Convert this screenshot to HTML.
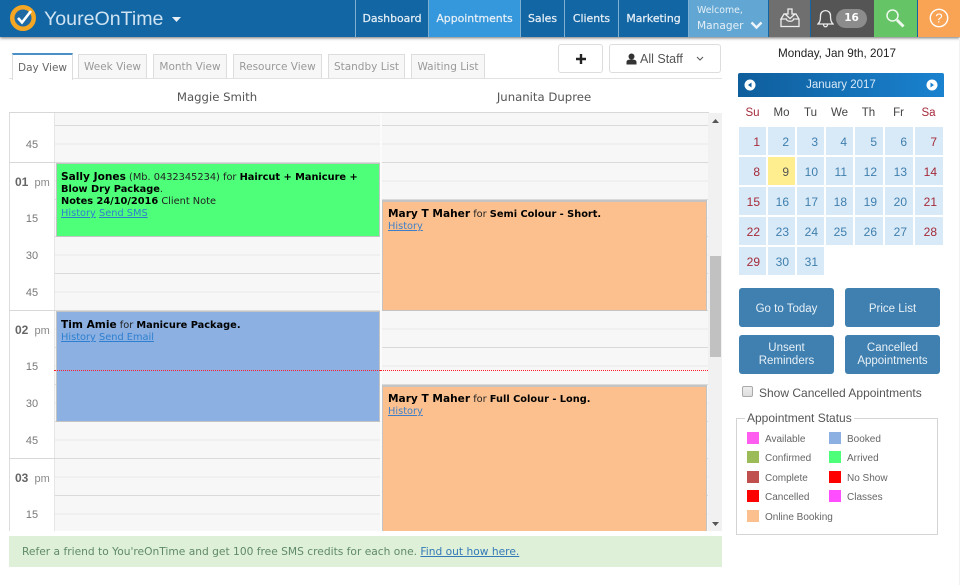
<!DOCTYPE html>
<html><head><meta charset="utf-8"><style>
html,body{margin:0;padding:0;background:#fff;width:960px;height:585px;overflow:hidden}
body{position:relative;font-family:"DejaVu Sans",sans-serif;font-size:10px;color:#111}
div,span.a,a.a,svg{position:absolute}
.t{white-space:nowrap}
.nav{top:0;height:37px;line-height:38px;background:#1266a3;color:#e4eef6;font-size:10.9px;text-align:center;font-weight:400;-webkit-text-stroke:.25px #e4eef6}
.tab{top:54px;height:23px;line-height:24px;border:1px solid #ddd;border-bottom:0;background:#f7f7f7;color:#999;font-size:10.5px;text-align:center;box-sizing:content-box}
.hd{top:90px;font-size:11.7px;color:#555;text-align:center}
.tm{left:25px;width:14px;text-align:center;font-family:"Liberation Sans",sans-serif;font-size:11px;color:#777}
.hr{left:15px;font-family:"Liberation Sans",sans-serif;font-size:11px;color:#888}
.hr b{font-size:12px;color:#666}
.ln{left:9px;width:46px;height:1px;background:#d8d8d8}
.ev{box-sizing:border-box;border:1px solid #c4c4c4;padding:7px 4px 4px;font-size:9.8px;line-height:12px;color:#222}
.ev b{color:#000}
.ev b.n{font-size:10.6px}
.ev u{color:#2f7fd0}
.dw{top:107px;width:29px;text-align:center;font-family:"Liberation Sans",sans-serif;font-size:11.5px;color:#444}
.c{width:27px;height:28px;line-height:30px;background:#d8e9f7;color:#3f7fae;font-family:"Liberation Sans",sans-serif;font-size:12px;text-align:right;padding-right:6px;box-sizing:border-box}
.r{color:#a52a3a}
.btn{background:#3f80b1;color:#e8f0f6;border-radius:3px;width:95px;height:39px;font-family:"Liberation Sans",sans-serif;font-size:11.5px;line-height:13px;text-align:center;box-sizing:border-box}
.sw{width:12px;height:12px}
.lb{font-family:"Liberation Sans",sans-serif;font-size:10px;color:#666;white-space:nowrap}
</style></head><body>

<!-- grid -->
<div style="left:9px;top:112px;width:713px;height:419px;background:#fff"></div>
<div style="left:9px;top:112px;width:1px;height:419px;background:#ddd"></div>
<div style="left:9px;top:112px;width:700px;height:1px;background:#d8d8d8"></div>
<div style="left:54px;top:113px;width:654px;height:418px;background-color:#f7f7f7;background-image:repeating-linear-gradient(to bottom,transparent 0,transparent 12px,#dadada 12px,#dadada 13px,transparent 13px,transparent 30px,#f0f0f0 30px,#f0f0f0 32px,transparent 32px,transparent 37px)"></div>
<div style="left:54px;top:113px;width:1px;height:418px;background:#e6e6e6"></div>
<div style="left:380px;top:113px;width:2px;height:418px;background:#fbfbfb"></div>
<div class="ln" style="top:162px"></div>
<div class="ln" style="top:310px"></div>
<div class="ln" style="top:458px"></div>

<div class="tm t" style="top:139px">45</div>
<div class="hr t" style="top:175px"><b>01</b>&nbsp; pm</div>
<div class="tm t" style="top:213px">15</div>
<div class="tm t" style="top:250px">30</div>
<div class="tm t" style="top:287px">45</div>
<div class="hr t" style="top:323px"><b>02</b>&nbsp; pm</div>
<div class="tm t" style="top:361px">15</div>
<div class="tm t" style="top:398px">30</div>
<div class="tm t" style="top:435px">45</div>
<div class="hr t" style="top:471px"><b>03</b>&nbsp; pm</div>
<div class="tm t" style="top:509px">15</div>

<div class="ev" style="left:56px;top:163px;width:324px;height:74px;background:#4dff79"><b class="n">Sally Jones</b> (Mb. 0432345234) for <b>Haircut + Manicure +<br>Blow Dry Package</b>.<br><b>Notes 24/10/2016</b> Client Note<br><u>History</u> <u>Send SMS</u></div>
<div class="ev" style="left:56px;top:311px;width:324px;height:111px;background:#8bb0e1"><b class="n">Tim Amie</b> for <b>Manicure Package.</b><br><u>History</u> <u>Send Email</u></div>
<div class="ev" style="left:382px;top:200px;width:325px;height:111px;background:#fbc08e;border-top:2px solid #c4c4c4;padding:6px 5px 4px"><b class="n">Mary T Maher</b> for <b>Semi Colour - Short.</b><br><u style="color:#3f7fc8">History</u></div>
<div class="ev" style="left:382px;top:385px;width:325px;height:146px;background:#fbc08e;border-bottom:0;border-top:2px solid #c4c4c4;padding:6px 5px 4px"><b class="n">Mary T Maher</b> for <b>Full Colour - Long.</b><br><u style="color:#3f7fc8">History</u></div>
<div style="left:54px;top:370px;width:326px;height:0;border-top:1px dotted #ff1a2a"></div>
<div style="left:380px;top:370px;width:328px;height:0;border-top:1px dotted #ff1a2a"></div>

<!-- scrollbar -->
<div style="left:708px;top:113px;width:14px;height:418px;background:#f1f1f1"></div>
<div style="left:710px;top:256px;width:11px;height:101px;background:#c1c1c1"></div>
<svg style="left:711px;top:118px" width="9" height="6"><path d="M1 5L4.5 1L8 5Z" fill="#555"/></svg>
<svg style="left:711px;top:521px" width="9" height="6"><path d="M1 1L8 1L4.5 5Z" fill="#555"/></svg>

<!-- notice -->
<div class="t" style="left:9px;top:536px;width:713px;height:31px;line-height:31px;background:#dff0d8;color:#5f8a68;font-size:10.66px;box-sizing:border-box;padding-left:13px">Refer a friend to You'reOnTime and get 100 free SMS credits for each one. <u style="color:#337ab7">Find out how here.</u></div>

<!-- tabs -->
<div style="left:9px;top:78px;width:713px;height:1px;background:#e2e2e2"></div>
<div class="tab t" style="left:12px;top:53px;width:59px;height:25px;line-height:27px;background:#fff;color:#666;border-top:2px solid #4a90c8;border-color:#ddd;border-top-color:#4a90c8">Day View</div>
<div class="tab t" style="left:78px;width:67px">Week View</div>
<div class="tab t" style="left:153px;width:72px">Month View</div>
<div class="tab t" style="left:233px;width:87px">Resource View</div>
<div class="tab t" style="left:328px;width:75px">Standby List</div>
<div class="tab t" style="left:411px;width:72px">Waiting List</div>
<div style="left:558px;top:44px;width:45px;height:29px;box-sizing:border-box;border:1px solid #ddd;border-radius:3px;background:#fff"></div>
<svg style="left:575px;top:53px" width="12" height="12"><path d="M6 1V11M1 6H11" stroke="#222" stroke-width="2.4"/></svg>
<div style="left:609px;top:44px;width:112px;height:29px;box-sizing:border-box;border:1px solid #ddd;border-radius:3px;background:#fff"></div>
<svg style="left:626px;top:53px" width="11" height="12"><circle cx="5.5" cy="3.5" r="3" fill="#333"/><path d="M.5 11.5V9C.5 7 2.5 6.5 5.5 6.5S10.5 7 10.5 9V11.5Z" fill="#333"/></svg>
<div class="t" style="left:640px;top:52px;font-family:'Liberation Sans',sans-serif;font-size:12.5px;color:#555">All Staff</div>
<svg style="left:695px;top:56px" width="10" height="6"><path d="M2 1L5 4L8 1" fill="none" stroke="#555" stroke-width="1"/></svg>

<div class="hd t" style="left:54px;width:326px">Maggie Smith</div>
<div class="hd t" style="left:380px;width:328px">Junanita Dupree</div>

<!-- header -->
<div style="left:0;top:0;width:960px;height:37px;background:#1266a3;box-shadow:0 1px 3px rgba(0,0,0,.55)"></div>
<svg style="left:9px;top:4px" width="28" height="28" viewBox="0 0 28 28"><circle cx="14" cy="14" r="10.5" fill="#fff" stroke="#f5a623" stroke-width="5"/><circle cx="14" cy="14" r="8.5" fill="#1f6aa3"/><path d="M9 14L13 18.5L22 7" fill="none" stroke="#fff" stroke-width="2.6"/></svg>
<div class="t" style="left:44px;top:8px;font-family:'Liberation Sans',sans-serif;font-size:19.6px;color:#cfe3f2">YoureOnTime</div>
<svg style="left:172px;top:17px" width="10" height="6"><path d="M0 0H9L4.5 5Z" fill="#e8f0f6"/></svg>
<div style="left:355px;top:0;width:1px;height:37px;background:#7fb0d2"></div>
<div class="nav t" style="left:356px;width:72px">Dashboard</div>
<div class="nav t" style="left:429px;width:91px;background:#3598dc">Appointments</div>
<div class="nav t" style="left:521px;width:43px">Sales</div>
<div class="nav t" style="left:565px;width:53px">Clients</div>
<div class="nav t" style="left:619px;width:69px">Marketing</div>
<div style="left:428px;top:0;width:1px;height:37px;background:#7fb0d2"></div>
<div style="left:520px;top:0;width:1px;height:37px;background:#7fb0d2"></div>
<div style="left:564px;top:0;width:1px;height:37px;background:#7fb0d2"></div>
<div style="left:618px;top:0;width:1px;height:37px;background:#7fb0d2"></div>
<div style="left:688px;top:0;width:1px;height:37px;background:#7fb0d2"></div>
<div style="left:689px;top:0;width:79px;height:37px;background:#62a7d3"></div>
<div class="t" style="left:697px;top:5px;font-size:9.4px;color:#e4eff7">Welcome,</div>
<div class="t" style="left:697px;top:20px;font-size:10.6px;color:#e4eff7">Manager</div>
<svg style="left:750px;top:21px" width="13" height="9"><path d="M1.5 1.5L6.5 6.5L11.5 1.5" fill="none" stroke="#eef5fa" stroke-width="2.4"/></svg>
<div style="left:769px;top:0;width:41px;height:37px;background:#6f6f6f"></div>
<svg style="left:780px;top:8px" width="20" height="20" viewBox="0 0 20 20" fill="none" stroke="#eee" stroke-width="1.3"><path d="M1 11V18.5H19V11L16 6H13M7 6H4L1 11H6.5C6.5 14 13.5 14 13.5 11H19"/><path d="M8 1H12V6H15L10 10.5L5 6H8Z"/></svg>
<div style="left:811px;top:0;width:63px;height:37px;background:#555"></div>
<svg style="left:817px;top:7px" width="17" height="21" viewBox="0 0 17 21" fill="none" stroke="#eee" stroke-width="1.3"><path d="M1 17C3 15 3.5 13 3.5 8.5C3.5 2 13.5 2 13.5 8.5C13.5 13 14 15 16 17Z"/><path d="M6.5 17.5C6.5 20.5 10.5 20.5 10.5 17.5"/></svg>
<div style="left:836px;top:9px;width:31px;height:19px;border-radius:10px;background:#8c8c8c;color:#fff;font-size:10.5px;font-weight:bold;line-height:19px;text-align:center">16</div>
<div style="left:874px;top:0;width:43px;height:37px;background:#65c466"></div>
<svg style="left:885px;top:8px" width="21" height="21" viewBox="0 0 21 21" fill="none" stroke="#eef8ee"><circle cx="7.5" cy="7.5" r="5.5" stroke-width="1.5"/><path d="M12 12L18.5 18.5" stroke-width="3"/></svg>
<div style="left:918px;top:0;width:42px;height:37px;background:#f9a354"></div>
<svg style="left:929px;top:8px" width="20" height="20" viewBox="0 0 20 20"><circle cx="10" cy="10" r="8.7" fill="none" stroke="#fff" stroke-width="1.4"/><text x="10" y="14.5" font-family="Liberation Sans" font-size="13" fill="#fff" text-anchor="middle">?</text></svg>

<!-- right panel -->
<div class="t" style="left:734px;top:47px;width:206px;text-align:center;font-family:'Liberation Sans',sans-serif;font-size:11.7px;color:#222">Monday, Jan 9th, 2017</div>
<div style="left:738px;top:73px;width:206px;height:24px;background:linear-gradient(to right,#0f5e9c,#1a82cf);border-radius:2px 2px 0 0"></div>
<div class="t" style="left:738px;top:79px;width:206px;text-align:center;font-family:'Liberation Sans',sans-serif;font-size:11.5px;color:#d8e9f7">January 2017</div>
<svg style="left:744px;top:79px" width="12" height="12"><circle cx="6" cy="6" r="5.5" fill="#fff"/><path d="M7.5 3.5V8.5L4 6Z" fill="#0f5e9c"/></svg>
<svg style="left:926px;top:79px" width="12" height="12"><circle cx="6" cy="6" r="5.5" fill="#fff"/><path d="M4.5 3.5V8.5L8 6Z" fill="#1a82cf"/></svg>

<div class="dw r" style="left:738px">Su</div><div class="dw" style="left:767px">Mo</div><div class="dw" style="left:796px">Tu</div><div class="dw" style="left:825px">We</div><div class="dw" style="left:854px">Th</div><div class="dw" style="left:884px">Fr</div><div class="dw r" style="left:914px">Sa</div>

<div class="c r" style="left:739px;top:127px">1</div><div class="c" style="left:768px;top:127px">2</div><div class="c" style="left:797px;top:127px">3</div><div class="c" style="left:826px;top:127px">4</div><div class="c" style="left:855px;top:127px;width:28px">5</div><div class="c" style="left:885px;top:127px;width:28px">6</div><div class="c r" style="left:915px;top:127px;width:28px">7</div>
<div class="c r" style="left:739px;top:157px">8</div><div class="c" style="left:768px;top:157px;background:#ffee90;color:#555">9</div><div class="c" style="left:797px;top:157px">10</div><div class="c" style="left:826px;top:157px">11</div><div class="c" style="left:855px;top:157px;width:28px">12</div><div class="c" style="left:885px;top:157px;width:28px">13</div><div class="c r" style="left:915px;top:157px;width:28px">14</div>
<div class="c r" style="left:739px;top:187px">15</div><div class="c" style="left:768px;top:187px">16</div><div class="c" style="left:797px;top:187px">17</div><div class="c" style="left:826px;top:187px">18</div><div class="c" style="left:855px;top:187px;width:28px">19</div><div class="c" style="left:885px;top:187px;width:28px">20</div><div class="c r" style="left:915px;top:187px;width:28px">21</div>
<div class="c r" style="left:739px;top:217px">22</div><div class="c" style="left:768px;top:217px">23</div><div class="c" style="left:797px;top:217px">24</div><div class="c" style="left:826px;top:217px">25</div><div class="c" style="left:855px;top:217px;width:28px">26</div><div class="c" style="left:885px;top:217px;width:28px">27</div><div class="c r" style="left:915px;top:217px;width:28px">28</div>
<div class="c r" style="left:739px;top:247px">29</div><div class="c" style="left:768px;top:247px">30</div><div class="c" style="left:797px;top:247px">31</div>

<div class="btn" style="left:739px;top:288px;line-height:42px">Go to Today</div>
<div class="btn" style="left:845px;top:288px;line-height:42px">Price List</div>
<div class="btn" style="left:739px;top:335px;padding-top:7px">Unsent<br>Reminders</div>
<div class="btn" style="left:845px;top:335px;padding-top:7px">Cancelled<br>Appointments</div>

<div style="left:742px;top:386px;width:11px;height:11px;box-sizing:border-box;border:1px solid #aaa;border-radius:2px;background:linear-gradient(#eee,#ddd)"></div>
<div class="t" style="left:759px;top:386px;color:#555;font-family:'Liberation Sans',sans-serif;font-size:12px">Show Cancelled Appointments</div>

<div style="left:736px;top:418px;width:202px;height:117px;box-sizing:border-box;border:1px solid #d4d4d4"></div>
<div class="t" style="left:745px;top:411px;background:#fff;padding:0 2px;font-family:'Liberation Sans',sans-serif;font-size:12px;color:#555">Appointment Status</div>
<div class="sw" style="left:747px;top:432px;background:#ff5cf0"></div><div class="lb" style="left:765px;top:434px">Available</div>
<div class="sw" style="left:829px;top:432px;background:#8bb0e1"></div><div class="lb" style="left:847px;top:434px">Booked</div>
<div class="sw" style="left:747px;top:451px;background:#9bbb59"></div><div class="lb" style="left:765px;top:453px">Confirmed</div>
<div class="sw" style="left:829px;top:451px;background:#4dff79"></div><div class="lb" style="left:847px;top:453px">Arrived</div>
<div class="sw" style="left:747px;top:471px;background:#c0504d"></div><div class="lb" style="left:765px;top:473px">Complete</div>
<div class="sw" style="left:829px;top:471px;background:#ff0000"></div><div class="lb" style="left:847px;top:473px">No Show</div>
<div class="sw" style="left:747px;top:490px;background:#ff0000"></div><div class="lb" style="left:765px;top:492px">Cancelled</div>
<div class="sw" style="left:829px;top:490px;background:#ff4dff"></div><div class="lb" style="left:847px;top:492px">Classes</div>
<div class="sw" style="left:747px;top:510px;background:#fbc08e"></div><div class="lb" style="left:765px;top:512px">Online Booking</div>
<div style="left:959px;top:38px;width:1px;height:547px;background:#f2f2f2"></div>
</body></html>
